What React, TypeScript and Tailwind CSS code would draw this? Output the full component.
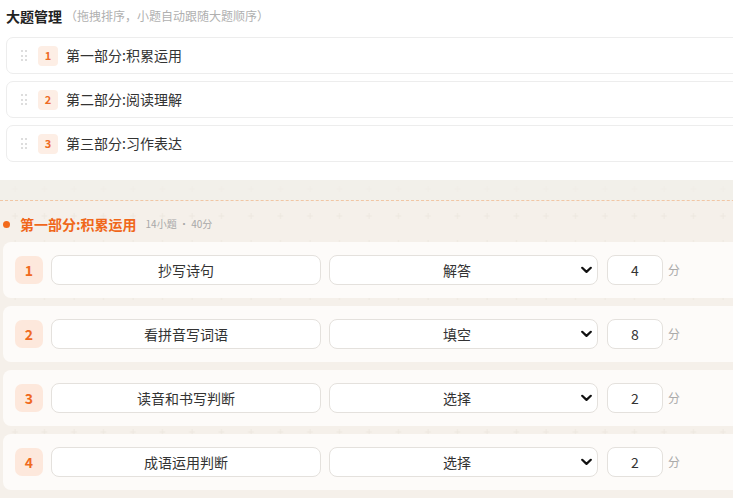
import React from "react";

const parts = [
  { n: 1, t: "第一部分:积累运用" },
  { n: 2, t: "第二部分:阅读理解" },
  { n: 3, t: "第三部分:习作表达" },
];

const questions = [
  { n: 1, name: "抄写诗句", type: "解答", score: 4 },
  { n: 2, name: "看拼音写词语", type: "填空", score: 8 },
  { n: 3, name: "读音和书写判断", type: "选择", score: 2 },
  { n: 4, name: "成语运用判断", type: "选择", score: 2 },
];

function DragHandle() {
  return (
    <div className="grid grid-cols-2 gap-x-[2px] gap-y-[2.5px] w-[6px]">
      {Array.from({ length: 6 }).map((_, i) => (
        <span key={i} className="block w-[2px] h-[2px] rounded-full bg-[#d2d2d2]" />
      ))}
    </div>
  );
}

function Chevron() {
  return (
    <svg width="11" height="7" viewBox="0 0 11 7" fill="none">
      <path d="M1.2 1.2 L5.5 5.4 L9.8 1.2" stroke="#111" strokeWidth="2.2" strokeLinecap="round" strokeLinejoin="round" />
    </svg>
  );
}

export default function App() {
  return (
    <div className="w-[733px] h-[498px] overflow-hidden bg-white font-['Noto_Sans_CJK_SC','Noto_Sans',sans-serif]">
      <div className="w-[800px]">
        <div className="pl-[6px] pt-[7px]">
          <div className="flex items-center h-[18px] leading-[18px]">
            <span className="text-[14px] font-bold text-[#222]">大题管理</span>
            <span className="ml-[3px] text-[12px] text-[#b0b0b0]">（拖拽排序，小题自动跟随大题顺序）</span>
          </div>
          <div className="mt-[12px] flex flex-col gap-[7px]">
            {parts.map((p) => (
              <div
                key={p.n}
                className="h-[37px] rounded-[7px] border border-[#ededed] bg-white flex items-center pl-[14px]"
              >
                <DragHandle />
                <div className="ml-[11px] w-[20px] h-[20px] rounded-[4px] bg-[#fdeee5] flex items-center justify-center text-[11px] font-bold text-[#ee6a24] leading-none">
                  {p.n}
                </div>
                <span className="ml-[8px] text-[14px] text-[#333]">{p.t}</span>
              </div>
            ))}
          </div>
        </div>

        <div className="relative mt-[18px] bg-[#f5f0ea] h-[400px]">
          <svg className="absolute inset-0 pointer-events-none" width="800" height="400">
            <defs>
              <pattern id="cross" x="0" y="0" width="29.5" height="27" patternUnits="userSpaceOnUse">
                <path d="M12 9 H18 M15 6 V12" stroke="#ede8e0" strokeWidth="1" />
              </pattern>
            </defs>
            <rect width="800" height="400" fill="url(#cross)" />
          </svg>
          <div className="relative">
            <div className="h-[21px] bg-[#f1f0ea]/70 border-b border-dashed border-[#f1c6a4]" />
            <div className="px-[3px]">
              <div className="mt-[14px] h-[18px] flex items-center">
                <span className="w-[7px] h-[7px] rounded-full bg-[#f26a1b]" />
                <span className="ml-[10px] text-[14px] font-bold text-[#f0671a] leading-[18px]">第一部分:积累运用</span>
                <span className="ml-[9px] text-[10px] text-[#a8a8a8] leading-[18px]">14小题 · 40分</span>
              </div>
              <div className="mt-[9px] flex flex-col gap-[8px]">
                {questions.map((q) => (
                  <div
                    key={q.n}
                    className="h-[56px] rounded-[8px] bg-[#fdfbf9] flex items-center pl-[12px]"
                  >
                    <div className="w-[28px] h-[28px] rounded-[7px] bg-[#fde8dc] flex items-center justify-center text-[14px] font-bold text-[#f06a20] leading-none">
                      {q.n}
                    </div>
                    <div className="ml-[8px] w-[270px] h-[30px] rounded-[8px] border border-[#e4e1dd] bg-white flex items-center justify-center text-[14px] text-[#333]">
                      {q.name}
                    </div>
                    <div className="relative ml-[8px] w-[269px] h-[30px] rounded-[8px] border border-[#e4e1dd] bg-white flex items-center justify-center pl-[4px] pr-[17px] text-[14px] text-[#333]">
                      {q.type}
                      <span className="absolute right-[5px] top-1/2 -translate-y-1/2 flex">
                        <Chevron />
                      </span>
                    </div>
                    <div className="ml-[9px] w-[56px] h-[30px] rounded-[8px] border border-[#e4e1dd] bg-white flex items-center justify-center text-[14px] text-[#333]">
                      {q.score}
                    </div>
                    <span className="ml-[5px] text-[12px] text-[#aaa]">分</span>
                  </div>
                ))}
              </div>
            </div>
          </div>
        </div>
      </div>
    </div>
  );
}
